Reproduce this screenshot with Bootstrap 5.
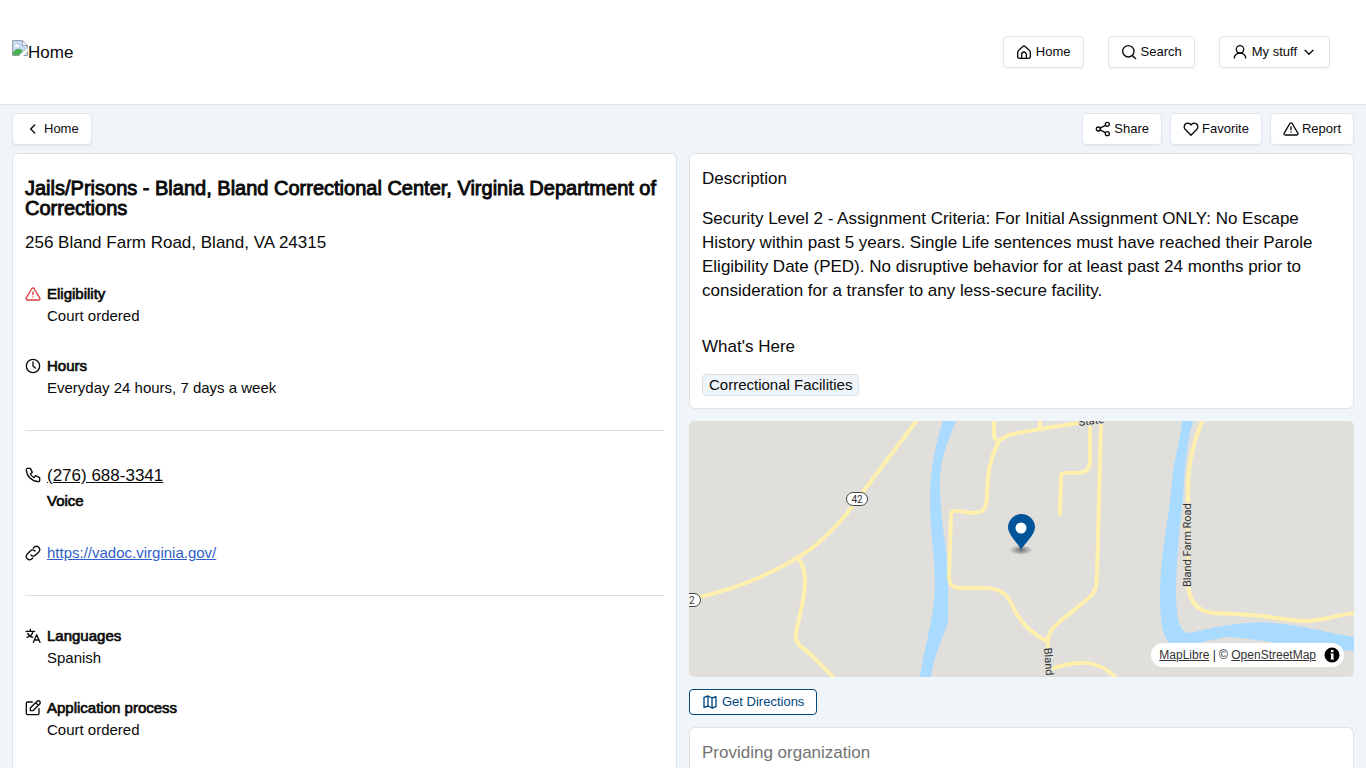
<!DOCTYPE html>
<html lang="en">
<head>
<meta charset="utf-8">
<meta name="viewport" content="width=device-width, initial-scale=1">
<title>Bland Correctional Center</title>
<link href="https://cdn.jsdelivr.net/npm/bootstrap@5.3.0/dist/css/bootstrap.min.css" rel="stylesheet">
<style>
  body { font-family: "Liberation Sans", Arial, sans-serif; font-size: 17px; line-height: 24px; color: #0a0a0a; background: #f0f5f9; }
  .site-header { height: 105px; padding: 0 36px 0 12px; border-bottom: 1px solid #dce4ea; }
  .brand { color: #0a0a0a; }
  .brand span { padding-top: 1px; }
  .btn { --bs-btn-font-size: 13px; --bs-btn-line-height: 20px; --bs-btn-padding-x: 12px; --bs-btn-padding-y: 5px; --bs-btn-border-radius: 4px; }
  .btn-plain { --bs-btn-color: #0a0a0a; --bs-btn-bg: #fff; --bs-btn-border-color: #dfe5ea; --bs-btn-hover-bg: #f0f5f9; box-shadow: 0 1px 2px rgba(0,0,0,.05); }
  .btn-map { --bs-btn-color: #00467f; --bs-btn-bg: #fff; --bs-btn-border-color: #00467f; --bs-btn-hover-bg: #f0f5f9; --bs-btn-padding-y: 2px; }
  .ico { width: 16px; height: 16px; flex: none; fill: none; stroke: currentColor; stroke-width: 2; stroke-linecap: round; stroke-linejoin: round; }
  .ico-alert { color: #dc3f3f; }
  .icon-gap { gap: 4px; }
  .toolbar .icon-gap { gap: 3px; }
  .columns { --bs-gutter-x: 12px; }
  .card { --bs-card-border-color: #dce4ea; --bs-card-border-radius: 6px; --bs-card-inner-border-radius: 5px; --bs-card-color: #0a0a0a; }
  .card-body { padding: 13px 12px 12px; }
  .thick { font-weight: 400; -webkit-text-stroke: .045em currentColor; }
  .page-title { font-size: 20px; line-height: 20px; margin: 11px 0 13px; }
  .facts { font-size: 15px; padding-top: 1px; }
  .fact { display: flex; gap: 6px; margin-top: 28px; }
  .fact h2 { font-size: 15px; line-height: 20px; margin: 0; }
  .fact .ico { margin-top: 2px; }
  .fact.tall { margin-top: 30px; }
  .fact.tall .ico { margin-top: 4px; }
  .rule { margin: 30px 0; border-top: 1px solid #d5dfe5; opacity: 1; }
  .rule.roomy { margin-bottom: 32px; }
  .phone { display: block; font-size: 17px; padding-top: 1px; color: #0a0a0a; }
  .fact .label-below { margin-top: 3px; }
  .web { color: #2f5fc8; }
  .section-title { font-size: 17px; line-height: 24px; font-weight: 400; margin: 0 0 16px; }
  .section-title.tight { margin-bottom: 15px; }
  .tag { font-size: 15px; line-height: 20px; padding: 0 6px; background: #f0f5f9; border: 1px solid #dce4ea; border-radius: 4px; }
  .map { height: 256px; margin: 12px 0; background: #e0dfdc; border-radius: 5px; }
  .map-drawing text { font-family: Roboto, sans-serif; font-size: 11px; fill: #333; paint-order: stroke; stroke: #e0dfdc; stroke-width: 2; }
  .map-drawing .shield { font-size: 10px; stroke: none; }
  .road { fill: none; stroke: #fff0ae; stroke-width: 4; stroke-linejoin: round; stroke-linecap: round; }
  .river { fill: #a9daff; }
  .credit { right: 10px; bottom: 10px; height: 24px; padding: 0 4px 0 8px; gap: 8px; border-radius: 12px; background: #fff; color: #222; font-size: 12px; }
  .credit a { color: #333; }
  .provider-card { margin-top: 12px; }
  .provider { color: #737373; }
</style>
</head>
<body class="vh-100 d-flex flex-column overflow-hidden">

<header class="site-header bg-white d-flex justify-content-between align-items-center flex-shrink-0">
  <a href="#" class="brand d-flex text-decoration-none">
    <svg width="16" height="16" viewBox="0 0 16 16" aria-hidden="true">
      <path d="M.5.5h10l5 5v10H.5z" fill="#c5d9f5" stroke="#9aa0a6"/>
      <path d="M10.500.5v5h5z" fill="#fff" stroke="#9aa0a6"/>
      <path d="M3 6c0-2 3-2 3-.5C8 5 8 7 7 7H3z" fill="#fff"/>
      <path d="M1 15v-3q5-6 10-1l-4 4z" fill="#4caf50"/>
      <path d="M7 16l9-8v3l-5 5z" fill="#fff"/>
    </svg><span>Home</span>
  </a>
  <nav class="d-flex gap-4">
    <button type="button" class="btn btn-plain d-flex align-items-center icon-gap">
      <svg class="ico" viewBox="0 0 24 24"><path d="M19 8.700l-5.300-4.900a2.600 2.600 0 0 0-3.400 0L5 8.700C3.200 10.200 2.500 10.500 2.500 13v5.500a3 3 0 0 0 3 3h13a3 3 0 0 0 3-3V13c0-2.500-.7-2.800-2.500-4.300M8.500 21v-5.500a3.500 3.500 0 0 1 7 0V21"/></svg>
      Home</button>
    <button type="button" class="btn btn-plain d-flex align-items-center icon-gap">
      <svg class="ico" viewBox="0 0 24 24"><circle cx="11" cy="11" r="8.500"/><path d="M22 22l-4.500-4.500"/></svg>
      Search</button>
    <button type="button" class="btn btn-plain d-flex align-items-center icon-gap">
      <svg class="ico" viewBox="0 0 24 24"><circle cx="12" cy="8" r="5.500"/><path d="M3.500 21c0-4 3.500-7.500 8.500-7.500s8.500 3.500 8.500 7.500"/></svg>
      My stuff
      <svg class="ico" viewBox="0 0 24 24"><path d="M6 9.500l6 6 6-6"/></svg></button>
  </nav>
</header>

<main class="container-fluid flex-fill d-flex flex-column pt-2">
  <div class="toolbar d-flex justify-content-between mb-2">
    <a href="#" class="btn btn-plain d-flex align-items-center icon-gap">
      <svg class="ico" viewBox="0 0 24 24"><path d="M14.500 6l-6 6 6 6"/></svg>
      Home</a>
    <div class="d-flex gap-2">
      <button type="button" class="btn btn-plain d-flex align-items-center icon-gap">
        <svg class="ico" viewBox="0 0 24 24"><circle cx="5" cy="12" r="3"/><circle cx="18.500" cy="5" r="3"/><circle cx="18.500" cy="19" r="3"/><path d="M7.700 10.700l8-4.200M7.700 13.300l8 4.200"/></svg>
        Share</button>
      <button type="button" class="btn btn-plain d-flex align-items-center icon-gap">
        <svg class="ico" viewBox="0 0 24 24"><path d="M20.800 12.500L12 21.500 3.200 12.500A5.500 5.500 0 1 1 12 6a5.500 5.500 0 1 1 8.800 6.500"/></svg>
        Favorite</button>
      <button type="button" class="btn btn-plain d-flex align-items-center icon-gap">
        <svg class="ico" viewBox="0 0 24 24"><path d="M12 9v4M12 16.500v.1M10.300 3.700L2.200 17.500A2 2 0 0 0 3.900 21h16.200a2 2 0 0 0 1.700-3.500L13.700 3.700a2 2 0 0 0-3.400 0z"/></svg>
        Report</button>
    </div>
  </div>

  <div class="row columns flex-fill">
    <div class="col-6 d-flex">
      <section class="card flex-fill rounded-bottom-0 border-bottom-0">
        <div class="card-body">
          <h1 class="page-title thick">Jails/Prisons - Bland, Bland Correctional Center, Virginia Department of Corrections</h1>
          <div>256 Bland Farm Road, Bland, VA 24315</div>
          <div class="facts">
            <div class="fact">
              <svg class="ico ico-alert" viewBox="0 0 24 24"><path d="M12 9v4M12 16.500v.1M10.300 3.700L2.200 17.500A2 2 0 0 0 3.900 21h16.200a2 2 0 0 0 1.700-3.500L13.700 3.700a2 2 0 0 0-3.400 0z"/></svg>
              <div><h2 class="thick">Eligibility</h2>Court ordered</div>
            </div>
            <div class="fact">
              <svg class="ico" viewBox="0 0 24 24"><circle cx="12" cy="12" r="10"/><path d="M12 6v6l3.500 3"/></svg>
              <div><h2 class="thick">Hours</h2>Everyday 24 hours, 7 days a week</div>
            </div>
            <hr class="rule roomy">
            <div class="fact tall">
              <svg class="ico" viewBox="0 0 24 24"><path d="M3.500 2H8l3 6-3 2.500a14 14 0 0 0 5.500 5.500l2.500-3 6 3v4.500a1.800 1.800 0 0 1-2 1.500C10 21.500 2.500 14 2 4a1.800 1.800 0 0 1 1.500-2"/></svg>
              <div><a href="tel:+12766883341" class="phone">(276) 688-3341</a><h2 class="thick label-below">Voice</h2></div>
            </div>
            <div class="fact tall">
              <svg class="ico" viewBox="0 0 24 24"><path d="M9 15a5 5 0 0 0 7 0l5-5a5 5 0 0 0-7-7l-1.500 1.500M15 9a5 5 0 0 0-7 0l-5 5a5 5 0 0 0 7 7l1.500-1.500"/></svg>
              <a href="#" class="web">https://vadoc.virginia.gov/</a>
            </div>
            <hr class="rule">
            <div class="fact">
              <svg class="ico" viewBox="0 0 24 24"><path d="M1.500 5h13M8 2v3M3 14c4-1 8-4.500 9-9M4 8c1 3 4 5 7.500 6M12.500 21.500L17.500 10l5 11.500M14 18h7"/></svg>
              <div><h2 class="thick">Languages</h2>Spanish</div>
            </div>
            <div class="fact">
              <svg class="ico" viewBox="0 0 24 24"><path d="M11 3H4a2 2 0 0 0-2 2v15a2 2 0 0 0 2 2h15a2 2 0 0 0 2-2v-7M8 16v-4L18 2a2.500 2.500 0 0 1 4 4L12 16H8M16 4l4 4"/></svg>
              <div><h2 class="thick">Application process</h2>Court ordered</div>
            </div>
          </div>
        </div>
      </section>
    </div>

    <div class="col-6 d-flex flex-column">
      <section class="card">
        <div class="card-body">
          <h2 class="section-title">Description</h2>
          <p class="mb-0 pb-2">Security Level 2 - Assignment Criteria: For Initial Assignment ONLY: No Escape History within past 5 years. Single Life sentences must have reached their Parole Eligibility Date (PED). No disruptive behavior for at least past 24 months prior to consideration for a transfer to any less-secure facility.</p>
          <h2 class="section-title tight mt-4">What's Here</h2>
          <div class="d-flex"><span class="tag">Correctional Facilities</span></div>
        </div>
      </section>

      <div class="map position-relative overflow-hidden flex-shrink-0">
        <svg class="map-drawing d-block w-100 h-100" viewBox="0 0 665 256" preserveAspectRatio="xMidYMid slice" role="img" aria-label="Map">
          <defs><radialGradient id="shade"><stop offset="0" stop-opacity=".5"/><stop offset="1" stop-opacity="0"/></radialGradient></defs>
          <path class="river" d="M254 0C246 25 241 50 241 79 241 110 246 135 246 166 245 200 235 225 231 256H242C245 235 253 217 259 202 260 160 258 140 256 122 253 100 251 85 251 59 252 35 258 22 267 0z"/>
          <path class="river" d="M493 0C492 15 485 40 483 59 481 90 474 120 472 150 470 175 471 200 475 213 478 221 482 224 490 224 510 224 525 217 538 216 560 216 600 226 665 230V216C640 212 610 204 584 202 550 200 530 206 501 212 490 211 488 200 487 176 487 150 490 105 494 79 495 50 498 20 504 0z"/>
          <g class="road">
            <path d="M229-2L170 76C150 105 130 124 108 137 75 157 45 168 11 176L-5 180"/>
            <path d="M109 137C119 150 116 166 114 179L107 212Q106 220 111 225C122 232 133 245 146 258"/>
            <path d="M305-2V16L309 21C318 12 330 12 351 8L384 3 415-2M351-2V8M309 22C301 38 299 50 298 72 298 86 296 92 284 92 274 92 262 86 262 94L260 155C260 164 264 167 272 167H296C314 167 320 176 326 190 333 203 343 213 359 221V230M359 221C359 208 368 203 380 193L401 176C407 170 408 165 408 154L412 0"/>
            <path d="M401 3V42Q400 52 388 52H376Q372 52 372 57L371 93"/>
            <path d="M362 248C390 238 411 239 428 258"/>
            <path d="M514-2C505 20 499 40 499 70V160C499 180 508 190 524 192L564 194C585 196 600 200 618 200 638 199 650 193 667 192"/>
          </g>
          <text transform="translate(502 166) rotate(-90)">Bland Farm Road</text>
          <text transform="translate(355 227) rotate(86)">Bland</text>
          <text transform="translate(390 5) rotate(-7)">State</text>
          <g fill="#fff" stroke="#444">
            <rect x="157.500" y="71.500" width="21" height="13" rx="6.500"/>
            <rect x="-9.500" y="172.500" width="21" height="13" rx="6.500"/>
          </g>
          <text class="shield" x="168" y="82" text-anchor="middle">42</text>
          <text class="shield" x="0" y="183" text-anchor="middle">42</text>
          <ellipse cx="332" cy="129" rx="12" ry="5" fill="url(#shade)"/>
          <path d="M332 129C330 123 319 114 319 106.500a13.500 13.500 0 0 1 27 0C346 114 335 123 332 129z" fill="#00549a"/>
          <circle cx="332" cy="107" r="5.500" fill="#fff"/>
        </svg>
        <div class="credit position-absolute d-flex align-items-center">
          <span><a href="#">MapLibre</a> | © <a href="#">OpenStreetMap</a></span>
          <svg width="16" height="16" viewBox="0 0 16 16" aria-hidden="true"><circle cx="8" cy="8" r="7.500"/><path d="M7 3h2.500v2.200H7zM6.500 6.500h3v5h.5v1H6.500v-1H7v-4h-.5z" fill="#fff"/></svg>
        </div>
      </div>

      <div class="d-flex">
        <button type="button" class="btn btn-map d-flex align-items-center icon-gap">
          <svg class="ico" viewBox="0 0 24 24"><path d="M3 5l6-2 6 3 6-2v15l-6 2-6-3-6 2zM9 3v15M15 6v15"/></svg>
          Get Directions</button>
      </div>

      <section class="card provider-card flex-fill rounded-bottom-0 border-bottom-0">
        <div class="card-body"><div class="provider">Providing organization</div></div>
      </section>
    </div>
  </div>
</main>
<script src="https://cdn.jsdelivr.net/npm/bootstrap@5.3.0/dist/js/bootstrap.bundle.min.js"></script>
</body>
</html>
